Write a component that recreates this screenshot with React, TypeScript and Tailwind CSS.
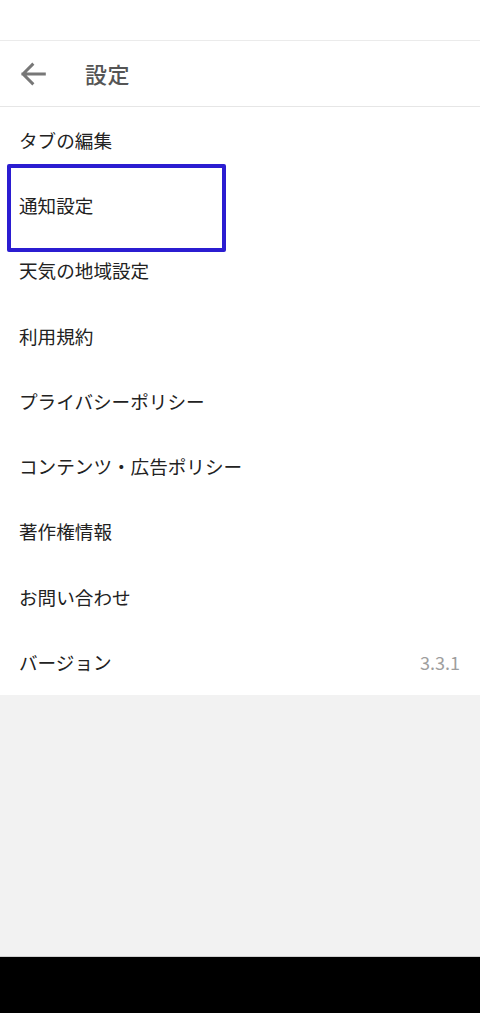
import React from "react";

const items = [
  "タブの編集",
  "通知設定",
  "天気の地域設定",
  "利用規約",
  "プライバシーポリシー",
  "コンテンツ・広告ポリシー",
  "著作権情報",
  "お問い合わせ",
];

const font = {
  fontFamily: '"Noto Sans CJK JP", "Noto Sans", Roboto, sans-serif',
};

export default function App() {
  return (
    <div className="w-[480px] h-[1013px] flex flex-col bg-[#f2f2f2]" style={font}>
      {/* status bar */}
      <div className="h-[41px] bg-white border-b border-[#ebebeb]" />

      {/* header */}
      <div className="h-[66px] bg-white border-b border-[#e6e6e6] flex items-center">
        <div className="w-[85px] pl-[17px] flex items-center">
          <svg width="32" height="32" viewBox="0 0 24 24" fill="none">
            <path
              d="M20.5 12H4.5M11.5 5l-7 7 7 7"
              stroke="#777777"
              strokeWidth="2.2"
              strokeLinecap="square"
            />
          </svg>
        </div>
        <span className="text-[22px] font-medium text-[#555555] tracking-[0.5px]">設定</span>
      </div>

      {/* list */}
      <div className="bg-white relative">
        {items.map((label) => (
          <div key={label} className="h-[65.3px] flex items-center px-[19px]">
            <span className="text-[18.6px] text-[#222222]">{label}</span>
          </div>
        ))}
        <div className="h-[65.3px] flex items-center justify-between pl-[19px] pr-[20px]">
          <span className="text-[18.6px] text-[#222222]">バージョン</span>
          <span className="text-[18px] text-[#9e9e9e]">3.3.1</span>
        </div>

        {/* highlight annotation */}
        <div className="absolute left-[7px] top-[57px] w-[219px] h-[88px] border-[4px] border-[#2b1dd1] rounded-[2px]" />
      </div>

      <div className="flex-1" />

      {/* nav bar */}
      <div className="h-[57px] bg-black border-t border-[#d0d0d0]" />
    </div>
  );
}
